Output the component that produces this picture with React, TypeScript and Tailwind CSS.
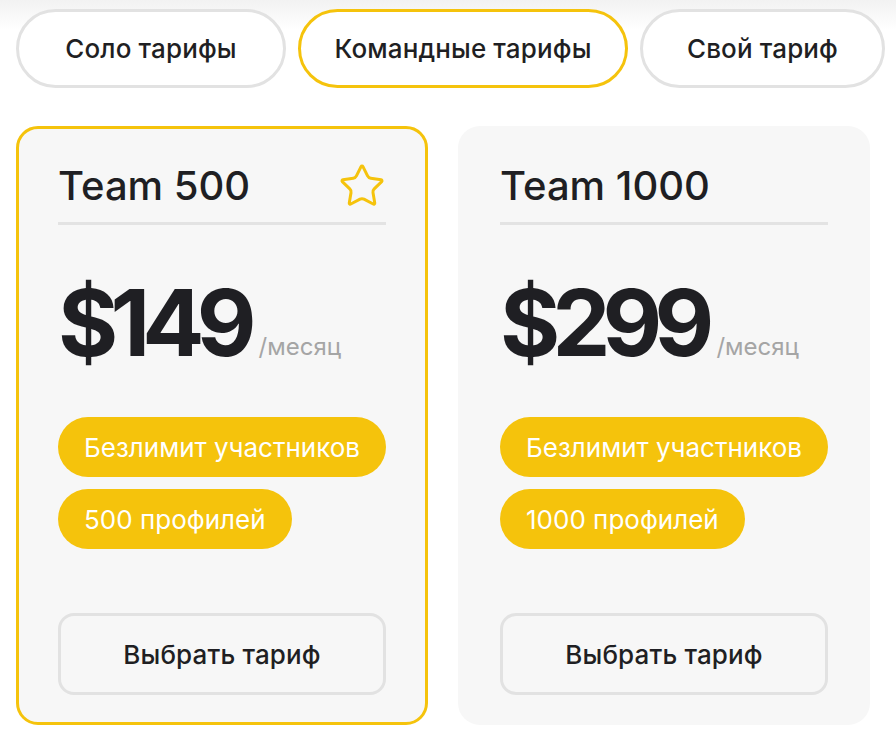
import { Star } from "lucide-react";

const tabs = [
    { label: "Соло тарифы", active: false, w: "w-[270px]" },
    { label: "Командные тарифы", active: true, w: "w-[330px]" },
    { label: "Свой тариф", active: false, w: "w-[245px]" },
];

const plans = [
    { name: "Team 500", price: "$149", features: ["Безлимит участников", "500 профилей"], featured: true },
    { name: "Team 1000", price: "$299", features: ["Безлимит участников", "1000 профилей"], featured: false },
];

const App = () => {
    return (
        <div
            className="min-h-screen w-[896px] overflow-hidden bg-white bg-gradient-to-b from-[#f2f2f2] to-white to-[30px] bg-no-repeat text-[#1f1f23]"
            style={{ fontFamily: "Inter, 'Noto Sans', sans-serif" }}
        >
            <div className="px-4 pt-[9px]">
                {/* Tabs */}
                <div className="flex gap-3">
                    {tabs.map((t) => (
                        <button
                            key={t.label}
                            className={`h-[79px] shrink-0 ${t.w} rounded-full border-[3px] bg-white text-[26px] font-medium tracking-[0.005em] ${t.active ? "border-[#f5c30c]" : "border-[#e2e2e2]"}`}
                        >
                            {t.label}
                        </button>
                    ))}
                </div>

                {/* Plans */}
                <div className="mt-[38px] flex gap-[30px]">
                    {plans.map((p) => (
                        <div
                            key={p.name}
                            className={`flex h-[599px] w-[412px] shrink-0 flex-col rounded-[22px] border-[3px] bg-[#f7f7f7] px-[39px] pt-[33px] pb-[27px] ${p.featured ? "border-[#f5c30c]" : "border-transparent"}`}
                        >
                            <div className="flex items-center justify-between border-b-[3px] border-[#e3e3e3] pb-[12px]">
                                <h3 className="text-[40px] leading-[48px] font-medium">{p.name}</h3>
                                {p.featured && <Star size={48} strokeWidth={1.5} className="text-[#f5c30c] -my-1" />}
                            </div>

                            <div className="mt-[52px] flex items-end">
                                <span className="text-[92px] leading-[92px] font-bold tracking-[-0.085em]">{p.price}</span>
                                <span className="mb-[4px] ml-[10px] text-[24px] text-[#a5a5a5]">/месяц</span>
                            </div>

                            <div className="mt-[48px] flex flex-col items-start gap-3">
                                {p.features.map((f) => (
                                    <span key={f} className="h-[60px] flex items-center whitespace-nowrap rounded-full bg-[#f5c30c] px-[26px] text-[26px] text-white">
                                        {f}
                                    </span>
                                ))}
                            </div>

                            <button className="mt-auto h-[82px] w-full rounded-[16px] border-[3px] border-[#e2e2e2] text-[26px] font-medium tracking-[0.005em]">
                                Выбрать тариф
                            </button>
                        </div>
                    ))}
                </div>
            </div>
        </div>
    );
};

export default App;
